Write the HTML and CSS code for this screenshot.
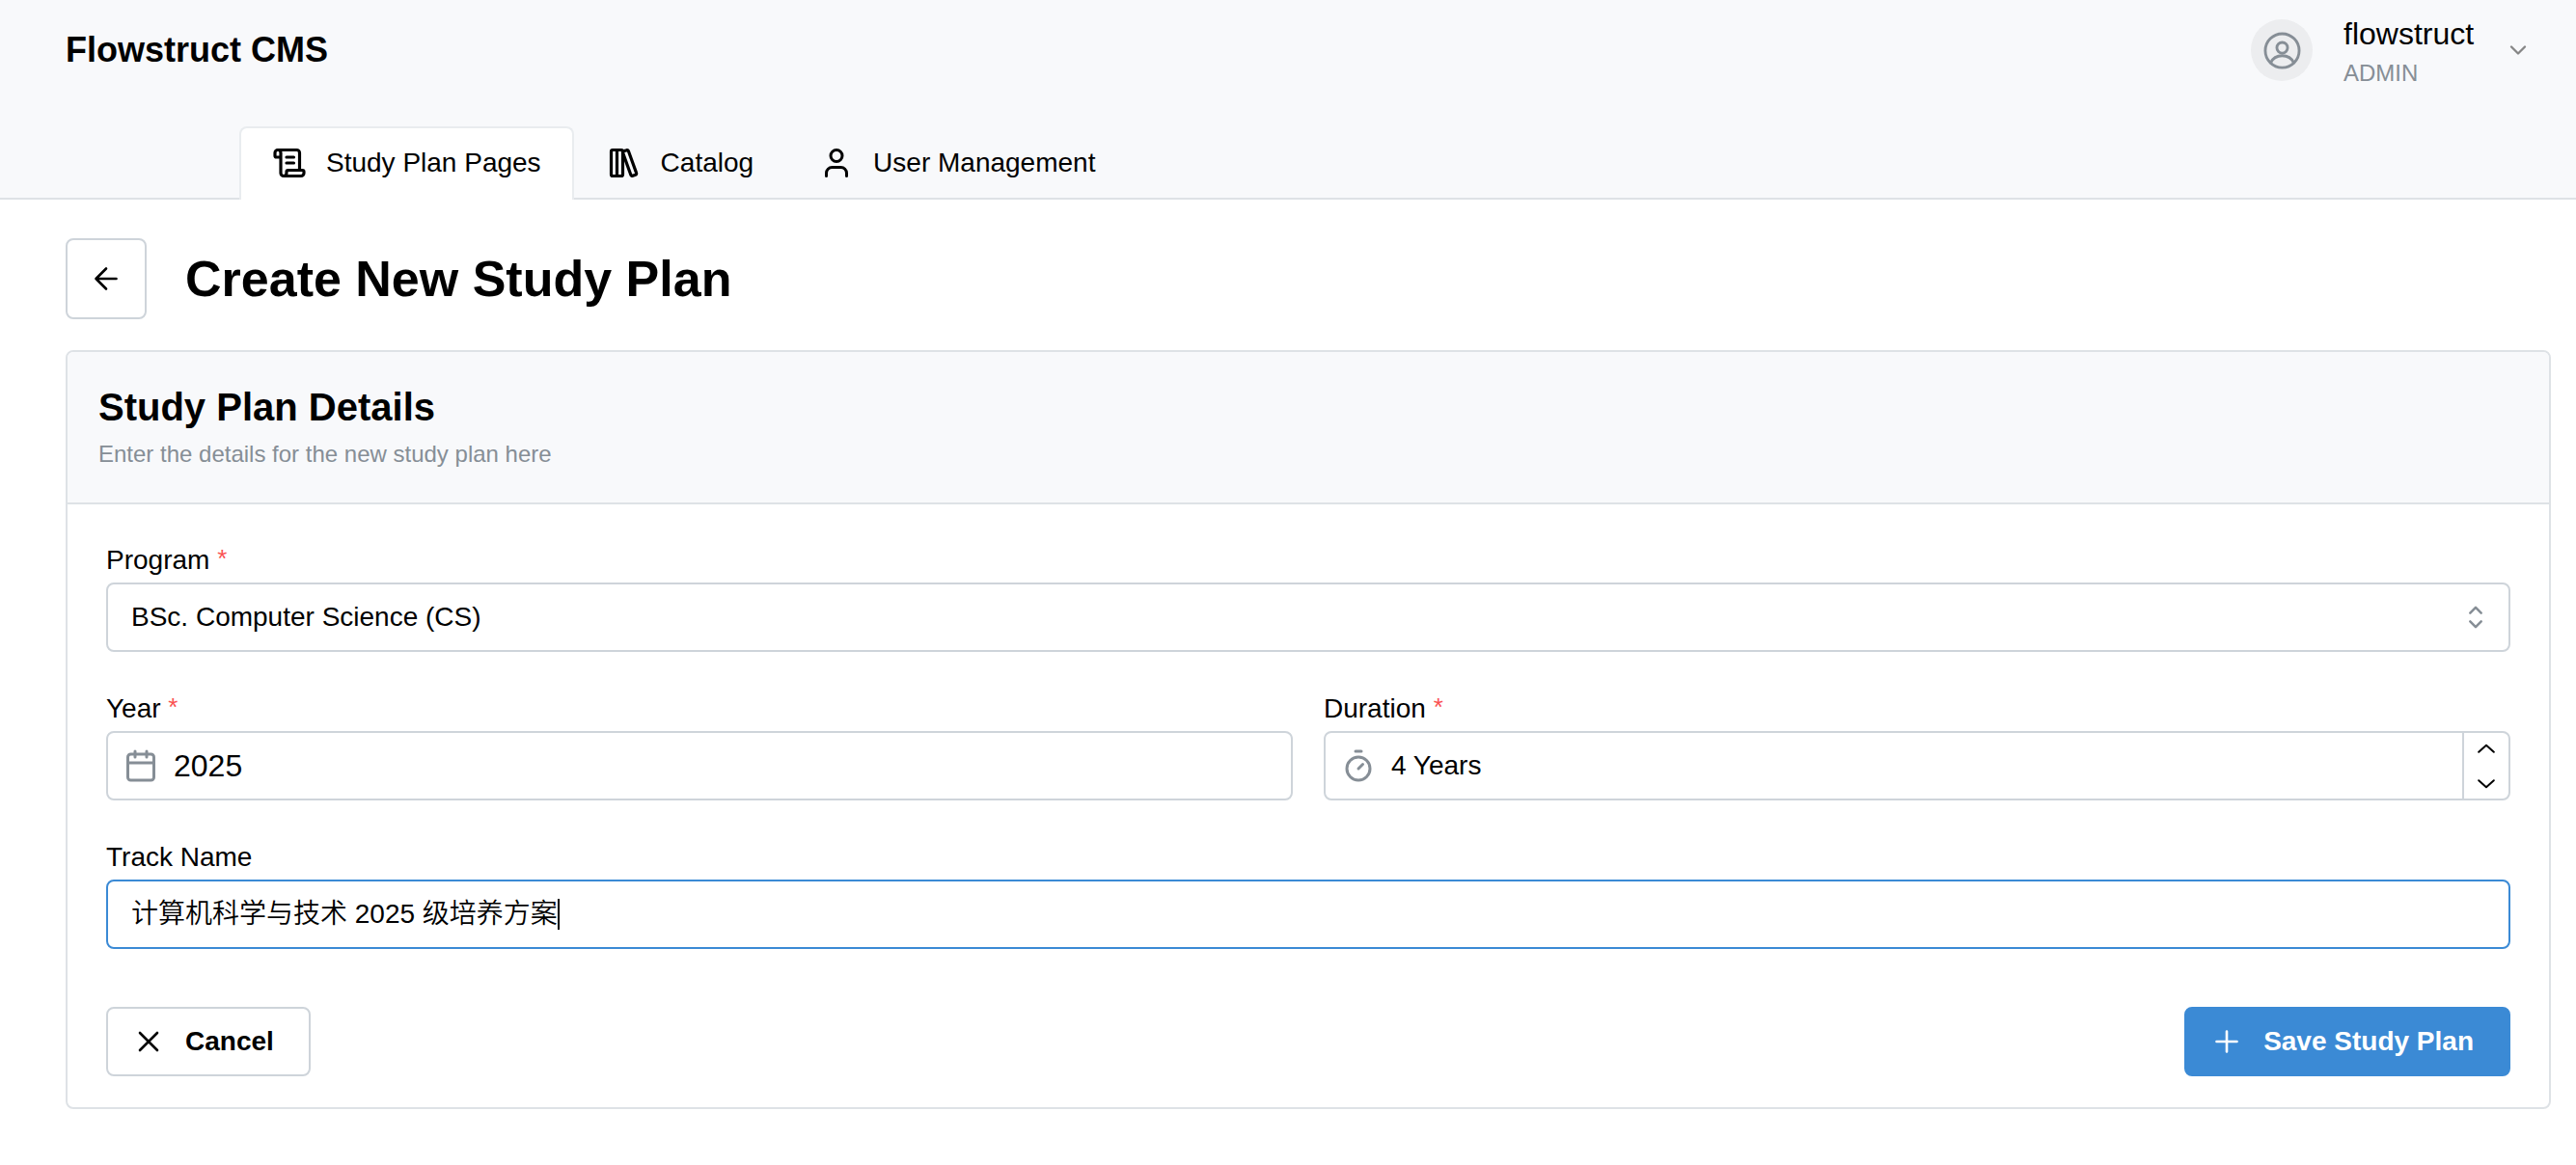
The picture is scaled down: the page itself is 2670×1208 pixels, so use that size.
FILE: index.html
```html
<!DOCTYPE html>
<html lang="en">
<head>
<meta charset="utf-8">
<title>Flowstruct CMS</title>
<link rel="stylesheet" href="styles.css">
</head>
<body>
<header class="header">
  <div class="topbar">
    <div class="brand">Flowstruct CMS</div>
    <div class="user">
      <div class="avatar">
        <svg class="avatar-icon" viewBox="0 0 15 15"><circle cx="7.5" cy="7.5" r="5.85"/><circle cx="7.5" cy="6.5" r="1.85"/><path d="M3.5 11.7C4.2 10.2 5.7 9.25 7.5 9.25s3.3.95 4 2.45"/></svg>
      </div>
      <div class="user-text">
        <div class="user-name">flowstruct</div>
        <div class="user-role">ADMIN</div>
      </div>
      <svg class="user-chevron" viewBox="0 0 24 24"><path d="m6 9 6 6 6-6"/></svg>
    </div>
  </div>
  <nav class="tabs">
    <a class="tab tab-active">
      <svg class="icon icon-bold" viewBox="0 0 24 24"><path d="M15 12h-5M15 8h-5M19 17V5a2 2 0 0 0-2-2H4"/><path d="M8 21h12a2 2 0 0 0 2-2v-1a1 1 0 0 0-1-1H11a1 1 0 0 0-1 1v1a2 2 0 1 1-4 0V5a2 2 0 1 0-4 0v2a1 1 0 0 0 1 1h3"/></svg>
      <span>Study Plan Pages</span>
    </a>
    <a class="tab">
      <svg class="icon icon-bold" viewBox="0 0 24 24"><rect width="8" height="18" x="3" y="3" rx="1"/><path d="M7 3v18M20.4 18.9c.2.5-.1 1.1-.6 1.3l-1.9.7c-.5.2-1.1-.1-1.3-.6L11.1 5.1c-.2-.5.1-1.1.6-1.3l1.9-.7c.5-.2 1.1.1 1.3.6Z"/></svg>
      <span>Catalog</span>
    </a>
    <a class="tab">
      <svg class="icon" viewBox="0 0 24 24"><path d="M19 21v-2a4 4 0 0 0-4-4H9a4 4 0 0 0-4 4v2"/><circle cx="12" cy="7" r="4"/></svg>
      <span>User Management</span>
    </a>
  </nav>
</header>
<main class="main">
  <div class="page-head">
    <button class="back" aria-label="Back"><svg class="icon icon-thin" viewBox="0 0 24 24"><path d="m12 19-7-7 7-7M19 12H5"/></svg></button>
    <h1 class="page-title">Create New Study Plan</h1>
  </div>
  <section class="card">
    <div class="card-head">
      <h2 class="card-title">Study Plan Details</h2>
      <p class="card-sub">Enter the details for the new study plan here</p>
    </div>
    <form class="form">
      <div class="field">
        <div class="label">Program <span class="required">*</span></div>
        <div class="control">
          <span class="value">BSc. Computer Science (CS)</span>
          <svg class="select-icon" viewBox="0 0 15 15"><path d="M5.25 5.75 7.5 3.5l2.25 2.25M5.25 9.25l2.25 2.25 2.25-2.25"/></svg>
        </div>
      </div>
      <div class="row">
        <div class="field">
          <div class="label">Year <span class="required">*</span></div>
          <div class="control with-icon">
            <svg class="icon muted" viewBox="0 0 24 24"><path d="M8 2v4M16 2v4M3 10h18"/><rect width="18" height="18" x="3" y="4" rx="2"/></svg>
            <span class="value value-large">2025</span>
          </div>
        </div>
        <div class="field">
          <div class="label">Duration <span class="required">*</span></div>
          <div class="control with-icon">
            <svg class="icon muted" viewBox="0 0 24 24"><path d="M10 2h4M12 14l3-3"/><circle cx="12" cy="14" r="8"/></svg>
            <span class="value">4 Years</span>
            <div class="stepper">
              <svg class="step-icon" viewBox="0 0 18 10"><path d="m1.2 8.8 7.8-7 7.8 7"/></svg>
              <svg class="step-icon" viewBox="0 0 18 10"><path d="m1.2 1.2 7.8 7 7.8-7"/></svg>
            </div>
          </div>
        </div>
      </div>
      <div class="field">
        <div class="label">Track Name</div>
        <div class="control focused"><span class="value track">计算机科学与技术 2025 级培养方案</span><span class="caret"></span></div>
      </div>
      <div class="actions">
        <button type="button" class="btn"><svg class="icon icon-thin" viewBox="0 0 24 24"><path d="M18 6 6 18M6 6l12 12"/></svg><span>Cancel</span></button>
        <button type="button" class="btn btn-primary"><svg class="icon icon-thin" viewBox="0 0 24 24"><path d="M5 12h14M12 5v14"/></svg><span>Save Study Plan</span></button>
      </div>
    </form>
  </section>
</main>
</body>
</html>
```
FILE: styles.css
```css
* { box-sizing: border-box; }
body {
  margin: 0;
  background: #fff;
  color: #000;
  font-family: "Liberation Sans", "Noto Sans CJK SC", sans-serif;
  font-size: 28px;
  line-height: 1.2;
}
h1, h2, p { margin: 0; }
button { font: inherit; color: inherit; }
svg { display: block; flex: none; fill: none; stroke: currentColor; stroke-linecap: round; stroke-linejoin: round; }
.icon { width: 36px; height: 36px; stroke-width: 2; }
.icon-bold { stroke-width: 2.12; }
.icon-thin { stroke-width: 1.75; }
.muted { color: #868e96; }

.header { height: 207px; background: #f8f9fb; border-bottom: 2px solid #dee2e6; display: flex; flex-direction: column; justify-content: space-between; }
.topbar { height: 104px; padding: 0 46px 0 68px; display: flex; align-items: center; justify-content: space-between; }
.brand { font-size: 36px; font-weight: 700; }
.user { display: flex; align-items: center; }
.avatar { width: 64px; height: 64px; border-radius: 50%; background: #ecedef; color: #868e96; display: flex; align-items: center; justify-content: center; }
.avatar-icon { width: 45px; height: 45px; stroke-width: .95; }
.user-text { margin-left: 32px; width: 135px; padding-top: 4px; }
.user-name { font-size: 32px; line-height: 42px; }
.user-role { font-size: 24px; line-height: 39px; color: #868e96; }
.user-chevron { width: 28px; height: 28px; margin-left: 32px; stroke-width: 2; color: #868686; }
.tabs { display: flex; margin: 0 0 -2px 248px; }
.tab { height: 76px; display: flex; align-items: center; gap: 20px; padding: 0 32px 2px; border: 2px solid transparent; border-bottom: 0; border-radius: 8px 8px 0 0; }
.tab-active { background: #fff; border-color: #e9ecef; }

.main { padding: 40px 26px 0 68px; }
.page-head { display: flex; align-items: center; gap: 40px; }
.back { width: 84px; height: 84px; padding: 0; border: 2px solid #ced4da; border-radius: 8px; background: #fff; display: flex; align-items: center; justify-content: center; }
.page-title { font-size: 52px; line-height: 70px; }
.card { margin-top: 32px; height: 787px; border: 2px solid #dee2e6; border-radius: 8px; overflow: hidden; }
.card-head { height: 158px; padding: 29px 32px; background: #f8f9fb; border-bottom: 2px solid #dee2e6; }
.card-title { font-size: 40px; line-height: 56px; }
.card-sub { font-size: 24px; line-height: 37px; margin-top: 2px; color: #868e96; }
.form { padding: 37px 40px 0; display: flex; flex-direction: column; gap: 38px; }
.row { display: grid; grid-template-columns: 1fr 1fr; gap: 32px; }
.label { height: 44px; line-height: 41px; }
.required { color: #fa5252; font-size: 26px; line-height: 0; vertical-align: 2px; }
.control { height: 72px; padding-left: 24px; border: 2px solid #ced4da; border-radius: 8px; display: flex; align-items: center; }
.with-icon { padding-left: 16px; }
.with-icon .value { margin-left: 16px; }
.value-large { font-size: 32px; }
.track { font-weight: 350; }
.select-icon { width: 38px; height: 38px; margin: 0 15px 0 auto; stroke-width: 1; color: #868e96; }
.stepper { margin-left: auto; width: 48px; height: 100%; border-left: 2px solid #ced4da; display: flex; flex-direction: column; align-items: center; justify-content: center; gap: 27px; }
.step-icon { width: 18px; height: 10px; stroke-width: 2; }
.focused { border-color: #3b8ad5; }
.caret { width: 2px; height: 32px; background: #000; }
.actions { display: flex; justify-content: space-between; margin-top: 22px; }
.btn { height: 72px; display: flex; align-items: center; gap: 20px; padding: 0 36px 0 24px; border: 2px solid #ced4da; border-radius: 8px; background: #fff; font-weight: 700; }
.btn-primary { background: #3b8ad5; border-color: #3b8ad5; color: #fff; }
```
